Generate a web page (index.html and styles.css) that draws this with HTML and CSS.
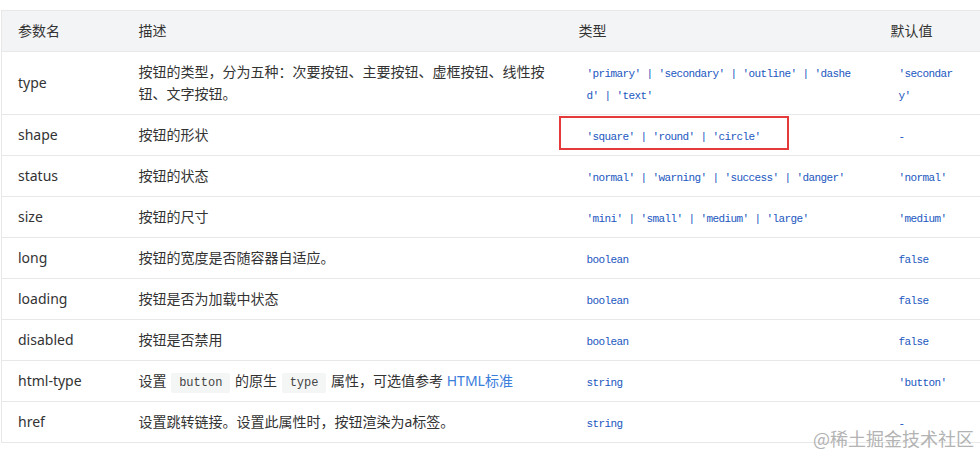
FILE: index.html
```html
<!DOCTYPE html>
<html lang="zh-CN">
<head>
<meta charset="utf-8">
<title>Button API</title>
<link rel="stylesheet" href="styles.css">
</head>
<body>
<div class="page">
  <table class="api">
    <colgroup>
      <col class="c1"><col class="c2"><col class="c3"><col class="c4">
    </colgroup>
    <thead>
      <tr><th>参数名</th><th>描述</th><th>类型</th><th>默认值</th></tr>
    </thead>
    <tbody>
      <tr class="tall">
        <td>type</td>
        <td>按钮的类型，分为五种：次要按钮、主要按钮、虚框按钮、线性按钮、文字按钮。</td>
        <td><div class="code">'primary' | 'secondary' | 'outline' | 'dashed' | 'text'</div></td>
        <td><div class="code val">'secondary'</div></td>
      </tr>
      <tr>
        <td>shape</td>
        <td>按钮的形状</td>
        <td class="marked"><div class="code">'square' | 'round' | 'circle'</div><span class="redbox"></span></td>
        <td><div class="code val">-</div></td>
      </tr>
      <tr>
        <td>status</td>
        <td>按钮的状态</td>
        <td><div class="code">'normal' | 'warning' | 'success' | 'danger'</div></td>
        <td><div class="code val">'normal'</div></td>
      </tr>
      <tr>
        <td>size</td>
        <td>按钮的尺寸</td>
        <td><div class="code">'mini' | 'small' | 'medium' | 'large'</div></td>
        <td><div class="code val">'medium'</div></td>
      </tr>
      <tr>
        <td>long</td>
        <td>按钮的宽度是否随容器自适应。</td>
        <td><div class="code">boolean</div></td>
        <td><div class="code val">false</div></td>
      </tr>
      <tr>
        <td>loading</td>
        <td>按钮是否为加载中状态</td>
        <td><div class="code">boolean</div></td>
        <td><div class="code val">false</div></td>
      </tr>
      <tr>
        <td>disabled</td>
        <td>按钮是否禁用</td>
        <td><div class="code">boolean</div></td>
        <td><div class="code val">false</div></td>
      </tr>
      <tr>
        <td>html-type</td>
        <td>设置 <code class="inline">button</code> 的原生 <code class="inline">type</code> 属性，可选值参考 <a class="link" href="#">HTML标准</a></td>
        <td><div class="code">string</div></td>
        <td><div class="code val">'button'</div></td>
      </tr>
      <tr>
        <td>href</td>
        <td>设置跳转链接。设置此属性时，按钮渲染为a标签。</td>
        <td><div class="code">string</div></td>
        <td><div class="code val">-</div></td>
      </tr>
    </tbody>
  </table>
  <div class="watermark">@稀土掘金技术社区</div>
</div>
</body>
</html>
```
FILE: styles.css
```css
html, body {
  margin: 0;
  padding: 0;
  background: #ffffff;
}

.page {
  position: relative;
  width: 980px;
  height: 456px;
  overflow: hidden;
  padding: 10px 0 0 1px;
  box-sizing: border-box;
  font-family: "Noto Sans", "Noto Sans CJK SC", sans-serif;
  font-size: 14px;
  color: #333333;
}

.api {
  border-collapse: collapse;
  table-layout: fixed;
  width: 1010px;
  border-left: 1px solid #e8e8e8;
}

.c1 { width: 121px; }
.c2 { width: 440px; }
.c3 { width: 312px; }
.c4 { width: 137px; }

.api th,
.api td {
  text-align: left;
  vertical-align: middle;
  padding: 9px 16px;
  line-height: 22px;
  height: 22px;
  border-top: 1px solid #e8e8e8;
  border-bottom: 1px solid #e8e8e8;
}

.api th {
  font-weight: normal;
  background: #f3f4f5;
  color: #333333;
}

.api td {
  background: #ffffff;
}

.code {
  font-family: "Liberation Mono", monospace;
  font-size: 11px;
  letter-spacing: -0.6px;
  color: #2157c0;
  padding-left: 8px;
  padding-top: 2px;
  margin-bottom: -2px;
  width: 266px;
  word-break: break-all;
  line-height: 22px;
}

.val {
  width: 56px;
}

.inline {
  font-family: "Liberation Mono", monospace;
  font-size: 12px;
  line-height: 1;
  color: #444444;
  background: #f4f5f5;
  padding: 3px 8px;
  margin: 0 1px;
  border-radius: 2px;
}

.link {
  color: #3a7ddb;
  text-decoration: none;
}

.marked {
  position: relative;
}

.redbox {
  position: absolute;
  left: -4px;
  top: 1px;
  width: 226px;
  height: 30px;
  border: 2px solid #e53a3a;
}

.watermark {
  position: absolute;
  right: 6px;
  top: 425px;
  font-family: "Noto Sans CJK SC", sans-serif;
  font-size: 18px;
  color: #b3b3b3;
  letter-spacing: 0;
}
```
